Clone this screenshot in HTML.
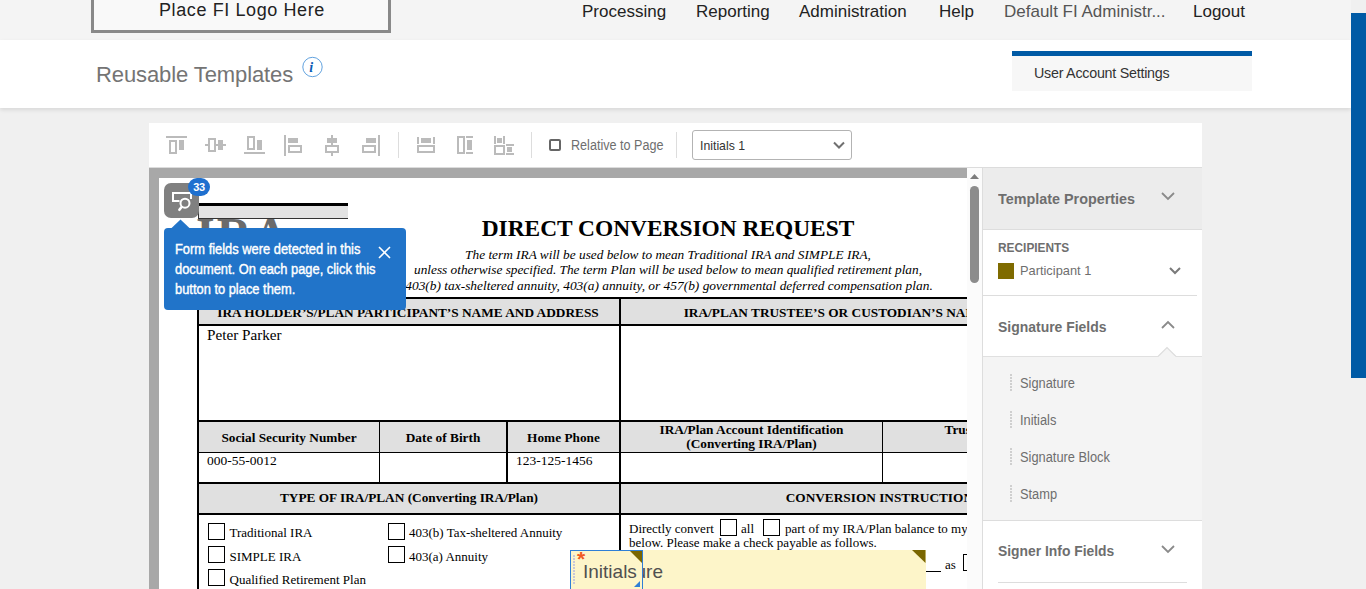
<!DOCTYPE html>
<html><head><meta charset="utf-8">
<style>
*{box-sizing:border-box;margin:0;padding:0}
html,body{width:1366px;height:589px;overflow:hidden}
body{position:relative;background:#f0f0f0;font-family:"Liberation Sans",sans-serif;color:#222}
.a{position:absolute;white-space:nowrap}
.ser{font-family:"Liberation Serif",serif;color:#000}
/* header */
#topbar{left:0;top:0;width:1351px;height:40px;background:#f4f4f4}
#logo{left:91px;top:-12px;width:300px;height:45px;border:3px solid #898989;background:#f9f9f9}
.nav{top:2px;font-size:17px;line-height:20px;color:#222}
#band{left:0;top:40px;width:1351px;height:68px;background:#fff;box-shadow:0 2px 4px rgba(0,0,0,.10)}
#vscroll{left:1351px;top:0;width:15px;height:589px;background:#f0f0f0}
#vthumb{left:1351px;top:13px;width:15px;height:365px;background:#005aa5}
/* toolbar */
#toolbar{left:149px;top:123px;width:1053px;height:45px;background:#fff;border-bottom:1px solid #dcdcdc}
#docgray{left:149px;top:168px;width:833px;height:421px;background:#a8a8a8}
#page{left:159px;top:178px;width:808px;height:411px;background:#fff;overflow:hidden}
#vtrack{left:967px;top:168px;width:15px;height:421px;background:#fbfbfb}
#panel{left:982px;top:168px;width:220px;height:421px;background:#fff;border-left:1px solid #ddd}
.pt{font-size:15px;line-height:20px;font-weight:bold;color:#6e6e6e;transform-origin:0 0}
.li{font-size:13.8px;line-height:16px;color:#6e6e6e;transform:scaleX(0.93);transform-origin:0 0;margin-top:1.5px}
.dots{width:2px;height:17px;margin-top:0;background:repeating-linear-gradient(#cfcfcf 0 2px,transparent 2px 3px)}
.pop{font-size:14px;line-height:20px;font-weight:normal;-webkit-text-stroke:0.4px #fff;color:#fff;transform:scaleX(0.92);transform-origin:0 0}
</style></head><body>
<div class="a" id="topbar"></div>
<div class="a" id="logo"></div>
<div class="a" style="left:159px;top:-1px;font-size:18px;line-height:22px;color:#222;letter-spacing:0.6px">Place FI Logo Here</div>
<div class="a nav" style="left:582px">Processing</div>
<div class="a nav" style="left:696px">Reporting</div>
<div class="a nav" style="left:799px">Administration</div>
<div class="a nav" style="left:939px">Help</div>
<div class="a nav" style="left:1004px;color:#555">Default FI Administr...</div>
<div class="a nav" style="left:1193px">Logout</div>
<div class="a" id="band"></div>
<div class="a" style="left:96px;top:62px;font-size:22px;line-height:26px;color:#747474;letter-spacing:-0.1px">Reusable Templates</div>
<svg class="a" style="left:296px;top:52px" width="32" height="30" viewBox="296 52 32 30"><circle cx="312.5" cy="67" r="9.7" fill="none" stroke="#3a8ad6" stroke-width="0.8"/><text x="309.2" y="72" font-family="Liberation Serif" font-weight="bold" font-style="italic" font-size="14" fill="#0a5bb5">i</text></svg>
<div class="a" id="vscroll"></div>
<div class="a" id="vthumb"></div>
<div class="a" style="left:1012px;top:51px;width:240px;height:40px;background:#f7f7f7;border-top:5px solid #005aa5"></div>
<div class="a" style="left:1034px;top:64px;font-size:14.3px;line-height:18px;color:#333;letter-spacing:-0.25px">User Account Settings</div>

<div class="a" id="toolbar"></div>
<svg class="a" style="left:0;top:0" width="1366" height="200" viewBox="0 0 1366 200"><g fill="#bbb" shape-rendering="crispEdges"><rect x="166" y="136" width="21" height="2"/><rect x="170" y="141" width="6" height="12" fill="none" stroke="#bbb" stroke-width="2"/><rect x="179" y="140" width="5" height="10"/><rect x="205" y="144" width="3" height="2"/><rect x="216" y="144" width="2" height="2"/><rect x="223" y="144" width="3" height="2"/><rect x="209" y="139" width="6" height="12" fill="none" stroke="#bbb" stroke-width="2"/><rect x="218" y="140" width="5" height="10"/><rect x="248" y="137" width="6" height="12" fill="none" stroke="#bbb" stroke-width="2"/><rect x="257" y="140" width="5" height="10"/><rect x="244" y="152" width="21" height="2"/><rect x="284" y="135" width="2" height="21"/><rect x="288" y="138" width="10" height="5"/><rect x="289" y="146" width="12" height="6" fill="none" stroke="#bbb" stroke-width="2"/><rect x="331" y="135" width="2" height="3"/><rect x="331" y="143" width="2" height="2"/><rect x="331" y="153" width="2" height="3"/><rect x="327" y="138" width="10" height="5"/><rect x="326" y="146" width="12" height="6" fill="none" stroke="#bbb" stroke-width="2"/><rect x="378" y="135" width="2" height="21"/><rect x="366" y="138" width="10" height="5"/><rect x="363" y="146" width="12" height="6" fill="none" stroke="#bbb" stroke-width="2"/><rect x="417" y="137" width="2" height="7"/><rect x="421" y="138" width="10" height="5"/><rect x="433" y="137" width="2" height="7"/><rect x="418" y="146" width="16" height="6" fill="none" stroke="#bbb" stroke-width="2"/><rect x="458" y="137" width="6" height="16" fill="none" stroke="#bbb" stroke-width="2"/><rect x="466" y="136" width="7" height="2"/><rect x="467" y="140" width="5" height="10"/><rect x="466" y="152" width="7" height="2"/><rect x="494" y="136" width="2" height="8"/><rect x="497" y="138" width="5" height="5"/><rect x="503" y="136" width="2" height="8"/><rect x="495" y="146" width="9" height="8" fill="none" stroke="#bbb" stroke-width="2"/><rect x="506" y="144" width="8" height="2"/><rect x="507" y="147" width="5" height="5"/><rect x="506" y="153" width="8" height="2"/></g><g fill="#ddd" shape-rendering="crispEdges"><rect x="398" y="132" width="1" height="26"/><rect x="531" y="132" width="1" height="26"/><rect x="676" y="132" width="1" height="26"/></g><rect x="550" y="140" width="10" height="10" rx="1" fill="none" stroke="#666" stroke-width="2"/></svg>
<div class="a" style="left:571px;top:136px;font-size:14px;line-height:18px;color:#6e6e6e;transform:scaleX(0.90);transform-origin:0 0">Relative to Page</div>
<div class="a" style="left:692px;top:130px;width:160px;height:30px;border:1px solid #b3b3b3;border-radius:3px;background:#fff"></div>
<div class="a" style="left:700px;top:137.5px;font-size:13.5px;line-height:16px;color:#333;transform:scaleX(0.91);transform-origin:0 0">Initials 1</div>
<svg class="a" style="left:833px;top:141px" width="12" height="8" viewBox="0 0 12 8"><path d="M1 1.5 L6 6.5 L11 1.5" fill="none" stroke="#707070" stroke-width="2"/></svg>
<div class="a" id="docgray"></div>
<div class="a" id="page">
<div class="a ser" style="left:37px;top:32.80px;font-size:48px;line-height:48px;font-weight:bold;color:#6b6b6b;letter-spacing:2px">IRA</div>
<div class="a" style="left:39px;top:25px;width:150px;height:16px;background:#333"></div>
<div class="a" style="left:40px;top:28px;width:149px;height:12px;background:#e3e3e3"></div>
<div class="a" style="left:39px;top:25px;width:150px;height:3px;background:#000"></div>
<div class="a ser" style="left:209px;width:600px;text-align:center;top:38.90px;font-size:23.4px;line-height:23.4px;font-weight:bold">DIRECT CONVERSION REQUEST</div>
<div class="a ser" style="left:209px;width:600px;text-align:center;top:69.66px;font-size:13.3px;line-height:13.3px;font-style:italic">The term IRA will be used below to mean Traditional IRA and SIMPLE IRA,</div>
<div class="a ser" style="left:209px;width:600px;text-align:center;top:84.56px;font-size:13.3px;line-height:13.3px;font-style:italic">unless otherwise specified. The term Plan will be used below to mean qualified retirement plan,</div>
<div class="a ser" style="left:210px;width:600px;text-align:center;top:100.98px;font-size:13.4px;line-height:13.4px;font-style:italic">403(b) tax-sheltered annuity, 403(a) annuity, or 457(b) governmental deferred compensation plan.</div>
<div class="a" style="left:40px;top:121px;width:801px;height:25px;background:#e0e0e0"></div>
<div class="a" style="left:40px;top:244px;width:801px;height:30px;background:#e0e0e0"></div>
<div class="a" style="left:40px;top:306px;width:801px;height:29px;background:#e0e0e0"></div>
<div class="a" style="left:38px;top:119px;width:803px;height:2px;background:#000"></div>
<div class="a" style="left:38px;top:146px;width:803px;height:2px;background:#000"></div>
<div class="a" style="left:38px;top:242px;width:803px;height:2px;background:#000"></div>
<div class="a" style="left:38px;top:274px;width:803px;height:1px;background:#000"></div>
<div class="a" style="left:38px;top:304px;width:803px;height:2px;background:#000"></div>
<div class="a" style="left:38px;top:335px;width:803px;height:2px;background:#000"></div>
<div class="a" style="left:38px;top:119px;width:2px;height:303px;background:#000"></div>
<div class="a" style="left:460px;top:119px;width:2px;height:303px;background:#000"></div>
<div class="a" style="left:220px;top:242px;width:1px;height:64px;background:#000"></div>
<div class="a" style="left:347px;top:242px;width:2px;height:64px;background:#000"></div>
<div class="a" style="left:723px;top:242px;width:1px;height:64px;background:#000"></div>
<div class="a ser" style="left:-51px;width:600px;text-align:center;top:127.86px;font-size:13.3px;line-height:13.3px;font-weight:bold">IRA HOLDER&#8217;S/PLAN PARTICIPANT&#8217;S NAME AND ADDRESS</div>
<div class="a ser" style="left:524.7px;top:127.86px;font-size:13.3px;line-height:13.3px;font-weight:bold">IRA/PLAN TRUSTEE&#8217;S OR CUSTODIAN&#8217;S NAME AND ADDRESS</div>
<div class="a ser" style="left:48px;top:149.27px;font-size:15.2px;line-height:15.2px;">Peter Parker</div>
<div class="a ser" style="left:-170px;width:600px;text-align:center;top:252.86px;font-size:13.3px;line-height:13.3px;font-weight:bold">Social Security Number</div>
<div class="a ser" style="left:-16px;width:600px;text-align:center;top:252.86px;font-size:13.3px;line-height:13.3px;font-weight:bold">Date of Birth</div>
<div class="a ser" style="left:104.5px;width:600px;text-align:center;top:252.86px;font-size:13.3px;line-height:13.3px;font-weight:bold">Home Phone</div>
<div class="a ser" style="left:292.5px;width:600px;text-align:center;top:244.56px;font-size:13.3px;line-height:13.3px;font-weight:bold">IRA/Plan Account Identification</div>
<div class="a ser" style="left:292.5px;width:600px;text-align:center;top:258.86px;font-size:13.3px;line-height:13.3px;font-weight:bold">(Converting IRA/Plan)</div>
<div class="a ser" style="left:785.5px;top:244.56px;font-size:13.3px;line-height:13.3px;font-weight:bold">Trustee/Custodian</div>
<div class="a ser" style="left:48px;top:275.69px;font-size:13.5px;line-height:13.5px;">000-55-0012</div>
<div class="a ser" style="left:357px;top:275.69px;font-size:13.5px;line-height:13.5px;">123-125-1456</div>
<div class="a ser" style="left:-50px;width:600px;text-align:center;top:313.36px;font-size:13.3px;line-height:13.3px;font-weight:bold">TYPE OF IRA/PLAN (Converting IRA/Plan)</div>
<div class="a ser" style="left:626.7px;top:313.36px;font-size:13.3px;line-height:13.3px;font-weight:bold">CONVERSION INSTRUCTIONS</div>
<div class="a" style="left:49px;top:345px;width:17px;height:17px;border:1px solid #000"></div>
<div class="a ser" style="left:70.5px;top:348.11px;font-size:13px;line-height:13px;">Traditional IRA</div>
<div class="a" style="left:49px;top:368px;width:17px;height:17px;border:1px solid #000"></div>
<div class="a ser" style="left:70.5px;top:372.11px;font-size:13px;line-height:13px;">SIMPLE IRA</div>
<div class="a" style="left:49px;top:391px;width:17px;height:17px;border:1px solid #000"></div>
<div class="a ser" style="left:70.5px;top:395.11px;font-size:13px;line-height:13px;">Qualified Retirement Plan</div>
<div class="a" style="left:229px;top:345px;width:17px;height:17px;border:1px solid #000"></div>
<div class="a ser" style="left:250px;top:348.11px;font-size:13px;line-height:13px;">403(b) Tax-sheltered Annuity</div>
<div class="a" style="left:229px;top:368px;width:17px;height:17px;border:1px solid #000"></div>
<div class="a ser" style="left:250px;top:372.11px;font-size:13px;line-height:13px;">403(a) Annuity</div>
<div class="a ser" style="left:470px;top:343.61px;font-size:13px;line-height:13px;">Directly convert</div>
<div class="a" style="left:561px;top:341px;width:17px;height:17px;border:1px solid #000"></div>
<div class="a ser" style="left:582px;top:343.61px;font-size:13px;line-height:13px;">all</div>
<div class="a" style="left:604px;top:341px;width:17px;height:17px;border:1px solid #000"></div>
<div class="a ser" style="left:626px;top:343.61px;font-size:13px;line-height:13px;">part of my IRA/Plan balance to my Roth IRA</div>
<div class="a ser" style="left:470px;top:358.11px;font-size:13px;line-height:13px;">below. Please make a check payable as follows.</div>
<div class="a" style="left:767px;top:393px;width:15px;height:1px;background:#000"></div>
<div class="a ser" style="left:786px;top:380.11px;font-size:13px;line-height:13px;">as</div>
<div class="a" style="left:804px;top:376px;width:17px;height:17px;border:1px solid #000"></div>
<div class="a" style="left:411px;top:372px;width:356px;height:50px;background:#fdf5c9"></div>
<svg class="a" style="left:753px;top:372px" width="14" height="14"><path d="M0 0 H13.5 V13 Z" fill="#7a6600"/></svg>
<div class="a" style="left:304px;top:383.5px;width:200px;text-align:right;font-size:19px;line-height:19px;color:#505050">Signature</div>
<div class="a" style="left:411px;top:372px;width:73px;height:50px;background:#fdf5c9;border:1px solid #2f7fd6"></div>
<svg class="a" style="left:471px;top:373px" width="14" height="14"><path d="M0 0 H12 V12 Z" fill="#7a6600"/></svg>
<div class="a" style="left:414px;top:377px;width:2px;height:29px;background:repeating-linear-gradient(#c8c8d8 0 2px,transparent 2px 3px)"></div>
<div class="a" style="left:424px;top:383.5px;font-size:19px;line-height:19px;color:#505050">Initials</div>
<div class="a" style="left:418px;top:370px;font-size:21px;line-height:21px;font-weight:bold;color:#f05a22">*</div>
<svg class="a" style="left:475px;top:403px" width="7" height="7"><path d="M6 0 V6 H0 Z" fill="#2f7fd6"/></svg>
<!--/page--></div>
<!--overlay-->
<div class="a" style="left:164px;top:183px;width:35px;height:35px;border-radius:7px;background:#808080"></div>
<svg class="a" style="left:164px;top:183px" width="35" height="35" viewBox="0 0 35 35">
<path d="M15.5 18 H9 V10 H27 V16" fill="none" stroke="#fff" stroke-width="2"/>
<circle cx="21" cy="20.2" r="4.5" fill="#808080" stroke="#fff" stroke-width="2"/>
<path d="M17.6 24 L15.4 26.8" stroke="#fff" stroke-width="2.6" stroke-linecap="round"/>
</svg>
<div class="a" style="left:188px;top:178px;width:22px;height:18px;border-radius:9px;background:#1f70cf;color:#fff;font-size:11px;font-weight:bold;line-height:18px;text-align:center;letter-spacing:-0.3px">33</div>
<svg class="a" style="left:170px;top:219px" width="21" height="10" viewBox="0 0 21 10"><path d="M0.5 10 L10.5 0.5 L20.5 10 Z" fill="#2174c9"/></svg>
<div class="a" style="left:164px;top:228px;width:242px;height:82px;border-radius:4px;background:#2174c9"></div>
<div class="a pop" style="left:175px;top:239px">Form fields were detected in this<br>document. On each page, click this<br>button to place them.</div>
<svg class="a" style="left:377px;top:245px" width="15" height="15" viewBox="0 0 15 15"><path d="M2 2 L13 13 M13 2 L2 13" stroke="#fff" stroke-width="1.6"/></svg>
<!--/overlay-->
<div class="a" id="vtrack"></div>
<svg class="a" style="left:967px;top:168px" width="15" height="130" viewBox="0 0 15 130"><path d="M3 11 L7.5 6 L12 11 Z" fill="#7c7c7c"/><rect x="3" y="18" width="9" height="97" rx="4.5" fill="#8c8c8c"/></svg>
<div class="a" id="panel"></div>
<div class="a" style="left:983px;top:168px;width:219px;height:62px;background:#ececec;border-bottom:1px solid #ddd"></div>
<div class="a pt" style="left:998px;top:189px;transform:scaleX(0.958)">Template Properties</div>
<svg class="a" style="left:1160px;top:190px" width="16" height="12" viewBox="0 0 16 12"><path d="M2 3 L8 9 L14 3" fill="none" stroke="#8a8a8a" stroke-width="1.8"/></svg>
<div class="a" style="left:998px;top:239.5px;font-size:13.5px;line-height:16px;font-weight:bold;color:#6e6e6e;transform:scaleX(0.88);transform-origin:0 0">RECIPIENTS</div>
<div class="a" style="left:998px;top:263px;width:16px;height:16px;background:#7f6b00"></div>
<div class="a" style="left:1020px;top:263px;font-size:13.5px;line-height:16px;color:#6e6e6e;transform:scaleX(0.95);transform-origin:0 0">Participant 1</div>
<svg class="a" style="left:1168px;top:265px" width="14" height="12" viewBox="0 0 14 12"><path d="M2 3 L7 8 L12 3" fill="none" stroke="#7a7a7a" stroke-width="2"/></svg>
<div class="a" style="left:982px;top:295px;width:215px;height:1px;background:#ddd"></div>
<div class="a pt" style="left:998px;top:317px;transform:scaleX(0.93)">Signature Fields</div>
<svg class="a" style="left:1160px;top:318px" width="16" height="12" viewBox="0 0 16 12"><path d="M2 10 L8 4 L14 10" fill="none" stroke="#8a8a8a" stroke-width="1.8"/></svg>
<div class="a" style="left:983px;top:356px;width:219px;height:165px;background:#f4f4f4;border-top:1px solid #e0e0e0;border-bottom:1px solid #ddd"></div>
<svg class="a" style="left:1156px;top:346px" width="22" height="12" viewBox="0 0 22 12"><path d="M2 10.5 L11 1.5 L20 10.5" fill="#f4f4f4" stroke="#dcdcdc" stroke-width="1.1"/><rect x="2.8" y="10" width="16.4" height="2" fill="#f4f4f4"/></svg>
<div class="a li" style="left:1020px;top:374px">Signature</div>
<div class="a li" style="left:1020px;top:411px">Initials</div>
<div class="a li" style="left:1020px;top:448px">Signature Block</div>
<div class="a li" style="left:1020px;top:485px">Stamp</div>
<div class="a dots" style="left:1010px;top:374px"></div>
<div class="a dots" style="left:1010px;top:411px"></div>
<div class="a dots" style="left:1010px;top:448px"></div>
<div class="a dots" style="left:1010px;top:485px"></div>
<div class="a pt" style="left:998px;top:541px;transform:scaleX(0.924)">Signer Info Fields</div>
<svg class="a" style="left:1160px;top:543px" width="16" height="12" viewBox="0 0 16 12"><path d="M2 3 L8 9 L14 3" fill="none" stroke="#8a8a8a" stroke-width="1.8"/></svg>
<div class="a" style="left:998px;top:582px;width:189px;height:1px;background:#ddd"></div>
</body></html>
